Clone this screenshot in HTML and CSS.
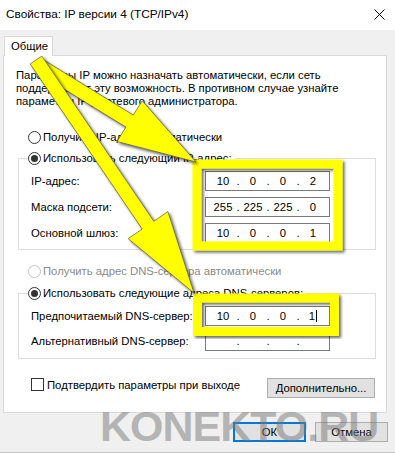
FILE: index.html
```html
<!DOCTYPE html>
<html lang="ru">
<head>
  <meta charset="UTF-8">
  <meta name="viewport" content="width=device-width, initial-scale=1.0">
  <title>Свойства: IP версии 4 (TCP/IPv4)</title>
  <link rel="stylesheet" href="styles.css">
</head>
<body>
  <div class="screen">
    <div class="window">
      <div class="titlebar">
        <span class="title">Свойства: IP версии 4 (TCP/IPv4)</span>
        <svg class="close" width="11" height="11" viewBox="0 0 11 11">
          <path d="M0.5 0.5 L10.5 10.5 M10.5 0.5 L0.5 10.5" stroke="#000" stroke-width="1" fill="none"/>
        </svg>
      </div>

      <div class="tabs">
        <div class="tab">Общие</div>
      </div>

      <div class="panel">
        <p class="intro">
          <span class="line">Параметры IP можно назначать автоматически, если сеть</span>
          <span class="line">поддерживает эту возможность. В противном случае узнайте</span>
          <span class="line">параметры IP у сетевого администратора.</span>
        </p>

        <div class="radio radioTop"><span class="circle"></span>Получить IP-адрес автоматически</div>

        <fieldset class="group groupIp">
          <legend><span class="radio"><span class="circle checked"></span>Использовать следующий IP-адрес:</span></legend>
          <div class="row">
            <span class="label">IP-адрес:</span>
            <div class="ipBox"><span class="seg">10</span><span class="sep">.</span><span class="seg">0</span><span class="sep">.</span><span class="seg">0</span><span class="sep">.</span><span class="seg">2</span></div>
          </div>
          <div class="row">
            <span class="label">Маска подсети:</span>
            <div class="ipBox"><span class="seg">255</span><span class="sep">.</span><span class="seg">225</span><span class="sep">.</span><span class="seg">225</span><span class="sep">.</span><span class="seg">0</span></div>
          </div>
          <div class="row">
            <span class="label">Основной шлюз:</span>
            <div class="ipBox"><span class="seg">10</span><span class="sep">.</span><span class="seg">0</span><span class="sep">.</span><span class="seg">0</span><span class="sep">.</span><span class="seg">1</span></div>
          </div>
        </fieldset>

        <div class="radio radioDns disabled"><span class="circle"></span>Получить адрес DNS-сервера автоматически</div>

        <fieldset class="group groupDns">
          <legend><span class="radio"><span class="circle checked"></span>Использовать следующие адреса DNS-серверов:</span></legend>
          <div class="row">
            <span class="label">Предпочитаемый DNS-сервер:</span>
            <div class="ipBox"><span class="seg">10</span><span class="sep">.</span><span class="seg">0</span><span class="sep">.</span><span class="seg">0</span><span class="sep">.</span><span class="seg">1<span class="caret"></span></span></div>
          </div>
          <div class="row">
            <span class="label">Альтернативный DNS-сервер:</span>
            <div class="ipBox"><span class="seg"></span><span class="sep">.</span><span class="seg"></span><span class="sep">.</span><span class="seg"></span><span class="sep">.</span><span class="seg"></span></div>
          </div>
        </fieldset>

        <div class="bottomRow">
          <div class="check"><span class="box"></span>Подтвердить параметры при выходе</div>
          <button class="button advanced">Дополнительно...</button>
        </div>
      </div>

      <div class="footer">
        <button class="button default">ОК</button>
        <button class="button">Отмена</button>
      </div>
    </div>

    <!-- выделение и стрелки поверх окна -->
    <svg class="overlay" width="395" height="453" viewBox="0 0 395 453">
      <defs>
        <filter id="shadow" x="-20%" y="-20%" width="140%" height="140%">
          <feDropShadow dx="2" dy="2" stdDeviation="1.5" flood-color="#000" flood-opacity="0.6"/>
        </filter>
      </defs>
      <rect x="197" y="164" width="141" height="82" fill="none" stroke="#ffff00" stroke-width="9" filter="url(#shadow)"/>
      <rect x="197.5" y="298" width="137" height="33.5" fill="none" stroke="#ffff00" stroke-width="9" filter="url(#shadow)"/>
      <polygon points="36.3,72 125.9,127.1 117,141.5 196,162 142.2,100.7 133.3,115.1 43.7,60"
               fill="#ffff00" stroke="rgba(60,60,60,0.6)" stroke-width="1" filter="url(#shadow)"/>
      <polygon points="41.8,56.1 153.8,221.2 167.9,211.6 194,293 128.1,238.6 142.2,229 30.2,63.9"
               fill="#ffff00" stroke="rgba(60,60,60,0.6)" stroke-width="1" filter="url(#shadow)"/>
    </svg>

    <div class="watermark">KONEKTO.RU</div>
  </div>
</body>
</html>
```

FILE: styles.css
```css
html, body {
  margin: 0;
  padding: 0;
  background-color: #f0f0f0;
  font-family: 'Liberation Sans', Arial, sans-serif;
  font-size: 11.3px;
  color: #000000;
}

.screen {
  position: relative;
  width: 395px;
  height: 453px;
  overflow: hidden;
}

.window {
  width: 395px;
  height: 453px;
  background-color: #f0f0f0;
  border-bottom: 1px solid #c4c4c4;
  box-sizing: border-box;
}

.titlebar {
  height: 30px;
  background-color: #ffffff;
  display: flex;
  align-items: center;
  justify-content: space-between;
  padding: 0 10px 2px 6px;
  box-sizing: border-box;
}

.title {
  font-size: 11.8px;
}

.close {
  display: block;
}

.tabs {
  display: flex;
  padding-left: 4px;
  margin-top: 6px;
  height: 19px;
}

.tab {
  position: relative;
  z-index: 1;
  height: 20px;
  width: 49px;
  box-sizing: border-box;
  background-color: #ffffff;
  border: 1px solid #d9d9d9;
  border-bottom: none;
  padding-left: 6px;
  line-height: 18px;
}

.panel {
  margin: 0 8px 0 3px;
  background-color: #ffffff;
  border: 1px solid #d9d9d9;
  padding: 13px 0 14px 0;
}

.intro {
  margin: 0;
  padding-left: 12px;
  line-height: 13px;
}

.line {
  display: block;
  white-space: nowrap;
}

.radio {
  display: flex;
  align-items: center;
  height: 16px;
  white-space: nowrap;
}

.radioTop {
  margin: 21px 0 0 24px;
}

.radioDns {
  margin: 13px 0 0 24px;
}

.circle {
  width: 13px;
  height: 13px;
  box-sizing: border-box;
  border: 1px solid #333333;
  border-radius: 50%;
  background-color: #ffffff;
  margin-right: 2px;
  display: flex;
  align-items: center;
  justify-content: center;
}

.circle.checked::after {
  content: '';
  width: 7px;
  height: 7px;
  border-radius: 50%;
  background-color: #333333;
}

.disabled {
  color: #8a8a8a;
}

.disabled .circle {
  border-color: #c4c4c4;
}

.group {
  margin: 0 10px 0 14px;
  border: 1px solid #dcdcdc;
  padding: 5px 0 6px 12px;
  min-width: 0;
}

.groupIp {
  margin-top: 5px;
}

.groupDns {
  margin-top: 6px;
  padding-bottom: 7px;
}

.group legend {
  padding: 0 3px 0 0;
  margin-left: -3px;
}

.row {
  display: flex;
  align-items: center;
  height: 20px;
}

.groupIp .row + .row {
  margin-top: 6px;
}

.groupDns .row + .row {
  margin-top: 5px;
}

.label {
  width: 174px;
  white-space: nowrap;
}

.ipBox {
  width: 125px;
  height: 20px;
  box-sizing: border-box;
  border: 1px solid #7a7a7a;
  background-color: #ffffff;
  display: flex;
  align-items: center;
  padding-left: 5px;
}

.seg {
  width: 24px;
  text-align: center;
}

.sep {
  width: 6px;
  text-align: center;
}

.caret {
  display: inline-block;
  width: 1px;
  height: 12px;
  background-color: #000000;
  margin-left: 1px;
  vertical-align: -2px;
}

.bottomRow {
  display: flex;
  align-items: flex-start;
  justify-content: space-between;
  margin: 19px 11px 0 27px;
}

.check {
  display: flex;
  align-items: center;
  height: 13px;
  white-space: nowrap;
}

.box {
  width: 13px;
  height: 13px;
  box-sizing: border-box;
  border: 1px solid #333333;
  background-color: #ffffff;
  margin-right: 3px;
}

.button {
  font-family: inherit;
  font-size: inherit;
  color: #000000;
  height: 20px;
  width: 73px;
  padding: 0;
  background-color: #e1e1e1;
  border: 1px solid #adadad;
  box-sizing: border-box;
}

.advanced {
  width: 108px;
}

.default {
  border: 2px solid #0078d7;
}

.footer {
  display: flex;
  justify-content: flex-end;
  gap: 9px;
  margin: 9px 7px 0 0;
}

.overlay {
  position: absolute;
  top: 0;
  left: 0;
  pointer-events: none;
}

.watermark {
  position: absolute;
  left: 100px;
  top: 405px;
  font-size: 43px;
  font-weight: 700;
  line-height: 1;
  letter-spacing: -1px;
  color: rgba(120, 120, 120, 0.5);
  white-space: nowrap;
  pointer-events: none;
}
```
